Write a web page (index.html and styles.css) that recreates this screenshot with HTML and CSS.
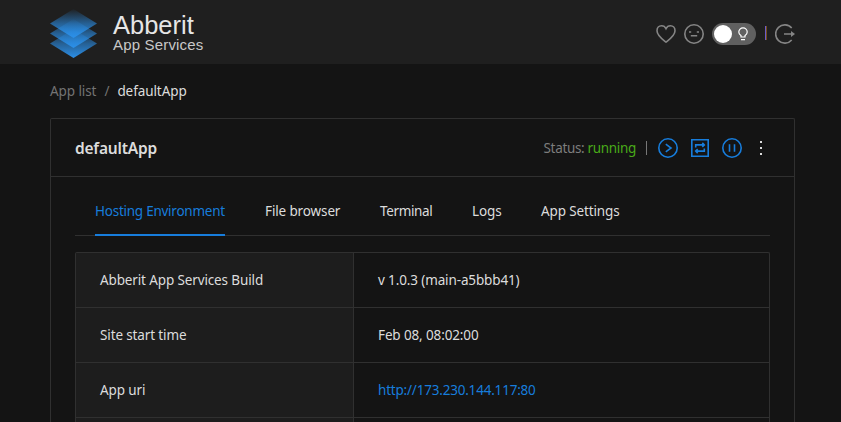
FILE: index.html
```html
<!DOCTYPE html>
<html lang="en">
<head>
<meta charset="utf-8">
<title>Abberit App Services</title>
<link rel="stylesheet" href="styles.css">
</head>
<body>
<header class="topbar">
  <svg class="logo" width="48" height="50" viewBox="0 0 48 50">
    <defs>
      <linearGradient id="sheet" x1="0" y1="0" x2="0" y2="1">
        <stop offset="0" stop-color="#2b8fe8" stop-opacity="0.02"/>
        <stop offset="0.5" stop-color="#2b8fe8" stop-opacity="0.58"/>
        <stop offset="1" stop-color="#2b8fe8"/>
      </linearGradient>
    </defs>
    <path fill="url(#sheet)" d="M23.500 20 47 34.500 23.500 49 0 34.500z"/>
    <path fill="url(#sheet)" d="M23.500 10 47 24.500 23.500 39 0 24.500z"/>
    <path fill="url(#sheet)" d="M23.500 0 47 14.500 23.500 29 0 14.500z"/>
  </svg>
  <div class="brand">
    <div class="brand-name">Abberit</div>
    <div class="brand-sub">App Services</div>
  </div>
  <div class="tools">
    <svg class="icon" width="20" height="20" viewBox="0 0 20 20"><path d="M10 18.100C6.500 15.300 1 11.500 1 6.700 1 3.700 3 1.800 5.500 1.800 7.500 1.800 9.200 3 10 4.700 10.800 3 12.500 1.800 14.500 1.800 17 1.800 19 3.700 19 6.700 19 11.500 13.500 15.300 10 18.100z"/></svg>
    <svg class="icon" width="20" height="20" viewBox="0 0 20 20"><circle cx="10" cy="10" r="9.200"/><path d="M5 8h2.200M12.800 8H15M6.800 11.700h6.400"/></svg>
    <div class="switch">
      <span class="knob"></span>
      <svg class="bulb" width="10" height="14" viewBox="0 0 10 14"><path d="M3 10V8.600C1.600 7.900 0.800 6.600 0.800 5.100a4.200 4.200 0 0 1 8.400 0C9.200 6.600 8.400 7.900 7 8.600V10zM3 12.700h4"/></svg>
    </div>
    <span class="divider"></span>
    <svg class="icon" width="20" height="20" viewBox="0 0 20 20"><path d="M16.700 4.100A9.100 9.100 0 1 0 16.700 15.900M9 10h8"/><path class="arrowhead" d="M16 7l4 3-4 3z"/></svg>
  </div>
</header>
<main class="page">
  <nav class="crumbs"><span>App list</span><span class="slash">/</span><span class="current">defaultApp</span></nav>
  <section class="card">
    <div class="card-head">
      <h1>defaultApp</h1>
      <div class="actions">
        <span class="status">Status: <span class="running">running</span></span>
        <span class="bar"></span>
        <svg class="action" width="20" height="20" viewBox="0 0 20 20"><circle cx="10" cy="10" r="9.200"/><path d="M7.800 6.200 13 10l-5.200 3.800"/></svg>
        <svg class="action" width="20" height="20" viewBox="0 0 20 20"><path d="M1.800 1.800h16.400v16.400H1.800z"/><path d="M5.700 9.500V6.900H14M12.300 4.900l2 2-2 2M14.300 10.500v2.600H6M7.700 11.100l-2 2 2 2"/></svg>
        <svg class="action" width="20" height="20" viewBox="0 0 20 20"><circle cx="10" cy="10" r="9.200"/><path d="M7.500 6.200v7.600M12.500 6.200v7.600"/></svg>
        <svg class="more" width="2" height="14" viewBox="0 0 2 14"><path d="M0 0h2v2H0zM0 6h2v2H0zM0 12h2v2H0z"/></svg>
      </div>
    </div>
    <div class="card-body">
      <div class="tabs">
        <div class="tab active">Hosting Environment</div>
        <div class="tab t-file">File browser</div>
        <div class="tab t-term">Terminal</div>
        <div class="tab t-logs">Logs</div>
        <div class="tab">App Settings</div>
      </div>
      <div class="info">
        <div class="label">Abberit App Services Build</div><div class="value">v 1.0.3 (main-a5bbb41)</div>
        <div class="label">Site start time</div><div class="value">Feb 08, 08:02:00</div>
        <div class="label">App uri</div><div class="value"><a class="uri">http://173.230.144.117:80</a></div>
        <div class="label last"></div><div class="value last"></div>
      </div>
    </div>
  </section>
</main>
</body>
</html>
```
FILE: styles.css
```css
* { box-sizing: border-box; }
body {
  margin: 0;
  height: 422px;
  overflow: hidden;
  background: #141414;
  color: #dcdcdc;
  font: 13.500px/22px "Noto Sans", sans-serif;
  letter-spacing: -0.130px;
  white-space: nowrap;
}
.topbar {
  display: flex;
  height: 64px;
  padding: 0 46px 0 50px;
  background: #1f1f1f;
}
.logo { margin-top: 9px; }
.brand {
  margin: 12px 0 0 15px;
  font-family: "Liberation Sans", sans-serif;
  letter-spacing: 0;
}
.brand-name { font-size: 25.500px; line-height: 26px; color: #e6e6e6; }
.brand-sub { font-size: 15px; line-height: 15px; margin-top: -1px; letter-spacing: 0.170px; color: #c8c8c8; }
.tools {
  display: flex;
  align-items: center;
  gap: 8px;
  height: 68px;
  margin-left: auto;
}
.icon { fill: none; stroke: #858585; stroke-width: 1.600; }
.arrowhead { fill: #858585; stroke: none; }
.switch {
  display: flex;
  align-items: center;
  justify-content: space-between;
  width: 44px;
  height: 22px;
  padding: 0 8px 0 2px;
  border-radius: 11px;
  background: #606060;
}
.knob { width: 18px; height: 18px; border-radius: 50%; background: #fff; }
.bulb { fill: none; stroke: #fff; stroke-width: 1.200; }
.divider { width: 2px; height: 14px; margin: -2px 0 0 1px; border-left: 1px solid #6c5bc8; background: #75501c; }
.page { height: 358px; padding: 16px 46px 0 50px; }
.crumbs { display: flex; padding-top: 1px; height: 22px; letter-spacing: -0.080px; line-height: 21px; color: #737373; }
.slash { margin: 0 8px; }
.current { color: #dcdcdc; }
.card {
  height: 304px;
  margin-top: 16px;
  border: 1px solid #303030;
  border-bottom: 0;
  border-radius: 2px 2px 0 0;
}
.card-head {
  display: flex;
  align-items: center;
  justify-content: space-between;
  height: 58px;
  padding: 0 32px 0 24px;
  border-bottom: 1px solid #303030;
}
h1 { margin: 0; font-size: 15.500px; font-weight: 600; letter-spacing: -0.200px; }
.actions { display: flex; align-items: center; gap: 12px; }
.status { letter-spacing: -0.330px; color: #7d7d7d; }
.running { color: #49aa19; }
.bar { width: 1px; height: 14px; margin: 0 -1px 0 -2px; background: #777; }
.action { fill: none; stroke: #177ddc; stroke-width: 1.600; }
.more { margin: 1px 0 0 6px; fill: #dcdcdc; }
.card-body { padding: 0 24px; }
.tabs {
  display: flex;
  gap: 40px;
  height: 59px;
  padding: 0 20px;
  border-bottom: 1px solid #303030;
}
.tab { height: 59px; padding-top: 23px; }
.active { width: 130px; letter-spacing: -0.250px; color: #177ddc; border-bottom: 2px solid #177ddc; }
.t-file { width: 75px; }
.t-term { width: 52px; letter-spacing: -0.350px; }
.t-logs { width: 29px; }
.info {
  display: grid;
  grid-template-columns: 278px 1fr;
  grid-template-rows: repeat(3, 55px) 4px;
  margin-top: 16px;
  border: 1px solid #303030;
  border-bottom: 0;
  border-radius: 2px 2px 0 0;
}
.label, .value { padding: 16px 24px; border-bottom: 1px solid #303030; }
.label { background: #1d1d1d; border-right: 1px solid #303030; }
.last { padding: 0; border-bottom: 0; }
.uri { letter-spacing: -0.200px; color: #177ddc; }
```
